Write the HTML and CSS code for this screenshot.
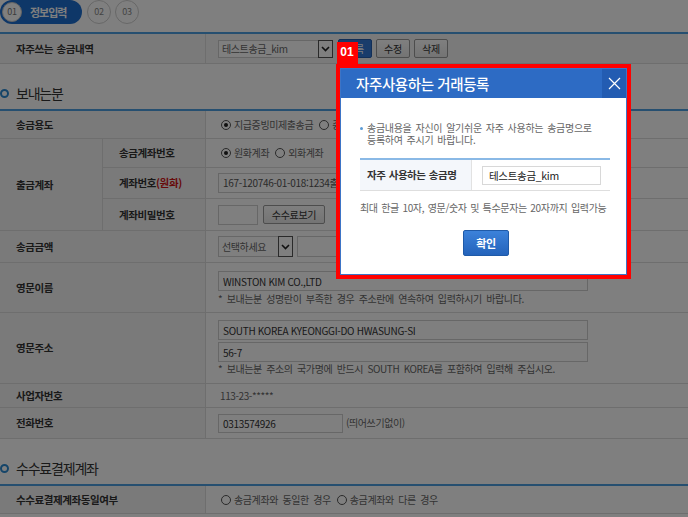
FILE: index.html
```html
<!DOCTYPE html>
<html lang="ko">
<head>
<meta charset="utf-8">
<title>해외송금 정보입력</title>
<link rel="stylesheet" href="styles.css">
</head>
<body>
<div class="page">
  <div class="steps">
    <div class="step-active"><span class="step-num">01</span><span class="step-label">정보입력</span></div>
    <span class="step-circle first">02</span>
    <span class="step-circle">03</span>
  </div>

  <div class="tbl">
    <div class="tr tr-fav h30">
      <div class="th">자주쓰는 송금내역</div>
      <div class="td gap4">
        <div class="select sel-fav"><span class="sel-text">테스트송금_kim</span><span class="sel-arrow"><svg width="9" height="6" viewBox="0 0 9 6"><path d="M1 1l3.5 3.5L8 1" fill="none" stroke="#222" stroke-width="1.6"/></svg></span></div>
        <button class="btn btn-blue">등록</button>
        <button class="btn">수정</button>
        <button class="btn">삭제</button>
      </div>
    </div>
  </div>

  <h2 class="section"><span class="ring"></span>보내는분</h2>

  <div class="tbl">
    <div class="tr h28">
      <div class="th">송금용도</div>
      <div class="td radios clip">
        <label class="opt"><span class="radio on"></span>지급증빙미제출송금</label>
        <label class="opt"><span class="radio"></span>증빙</label>
      </div>
    </div>
    <div class="tr group">
      <div class="th">출금계좌</div>
      <div class="sub">
        <div class="subrow h29">
          <div class="th sub-th">송금계좌번호</div>
          <div class="td radios">
            <label class="opt"><span class="radio on"></span>원화계좌</label>
            <label class="opt"><span class="radio"></span>외화계좌</label>
          </div>
        </div>
        <div class="subrow h31">
          <div class="th sub-th">계좌번호<em class="red">(원화)</em></div>
          <div class="td">
            <div class="field w370 acct">167-120746-01-018:1234출금</div>
          </div>
        </div>
        <div class="subrow h31">
          <div class="th sub-th">계좌비밀번호</div>
          <div class="td gap5">
            <input class="field w40 h20" type="password" readonly>
            <button class="btn btn-fee">수수료보기</button>
          </div>
        </div>
      </div>
    </div>
    <div class="tr h32">
      <div class="th">송금금액</div>
      <div class="td gap4">
        <div class="select sel-amt"><span class="sel-text">선택하세요</span><span class="sel-arrow"><svg width="9" height="6" viewBox="0 0 9 6"><path d="M1 1l3.5 3.5L8 1" fill="none" stroke="#222" stroke-width="1.6"/></svg></span></div>
        <input class="field w120 h21" type="text" readonly>
      </div>
    </div>
    <div class="tr h50">
      <div class="th">영문이름</div>
      <div class="td stack">
        <input class="field w370 h20" type="text" value="WINSTON KIM CO.,LTD" readonly>
        <p class="note">* 보내는분 성명란이 부족한 경우 주소란에 연속하여 입력하시기 바랍니다.</p>
      </div>
    </div>
    <div class="tr h71">
      <div class="th">영문주소</div>
      <div class="td stack stack-addr">
        <input class="field w370 h20" type="text" value="SOUTH KOREA KYEONGGI-DO HWASUNG-SI" readonly>
        <input class="field w370 h20" type="text" value="56-7" readonly>
        <p class="note">* 보내는분 주소의 국가명에 반드시 SOUTH KOREA를 포함하여 입력해 주십시오.</p>
      </div>
    </div>
    <div class="tr h24">
      <div class="th">사업자번호</div>
      <div class="td"><span class="biz">113-23-*****</span></div>
    </div>
    <div class="tr h31">
      <div class="th">전화번호</div>
      <div class="td gap3">
        <input class="field w125 h19" type="text" value="0313574926" readonly>
        <span class="hint">(띄어쓰기없이)</span>
      </div>
    </div>
  </div>

  <h2 class="section"><span class="ring"></span>수수료결제계좌</h2>

  <div class="tbl">
    <div class="tr h28">
      <div class="th">수수료결제계좌동일여부</div>
      <div class="td radios">
        <label class="opt"><span class="radio"></span>송금계좌와 동일한 경우</label>
        <label class="opt"><span class="radio"></span>송금계좌와 다른 경우</label>
      </div>
    </div>
  </div>
</div>

<div class="overlay"></div>

<div class="callout">
  <span class="badge">01</span>
  <div class="modal">
    <div class="modal-head">
      <h3 class="modal-title">자주사용하는 거래등록</h3>
      <button class="modal-close" aria-label="닫기"><svg width="13" height="13" viewBox="0 0 13 13"><path d="M1 1l11 11M12 1L1 12" stroke="#fff" stroke-width="1.2"/></svg></button>
    </div>
    <div class="modal-body">
      <p class="desc"><span class="dot"></span><span>송금내용을 자신이 알기쉬운 자주 사용하는 송금명으로<br>등록하여 주시기 바랍니다.</span></p>
      <div class="mtbl">
        <div class="mth">자주 사용하는 송금명</div>
        <div class="mtd"><input class="mfield" type="text" value="테스트송금_kim" readonly></div>
      </div>
      <p class="mnote">최대 한글 10자, 영문/숫자 및 특수문자는 20자까지 입력가능</p>
      <button class="btn-ok">확인</button>
    </div>
  </div>
</div>
</body>
</html>
```

FILE: styles.css
```css
* { box-sizing: border-box; margin: 0; padding: 0; }
html, body { width: 688px; height: 517px; overflow: hidden; }
body {
  position: relative;
  background: #fff;
  font-family: "Noto Sans CJK KR", "Noto Sans", sans-serif;
  font-size: 10px;
  line-height: 12px;
  color: #666;
}
button, input { font-family: inherit; }
em { font-style: normal; }

/* steps */
.steps { height: 32px; display: flex; align-items: flex-start; gap: 4px; }
.step-active {
  display: flex; align-items: center;
  width: 82px; height: 24px; border-radius: 12px;
  background: #1c6ed0; padding-left: 2px;
}
.step-num {
  width: 20px; height: 20px; border-radius: 50%;
  background: #fff; border: 1px solid #c8c8c8;
  display: flex; align-items: center; justify-content: center;
  font-size: 9px; color: #777; letter-spacing: -0.3px;
}
.step-label { margin-left: 8px; color: #fff; font-weight: 700; font-size: 11px; letter-spacing: -1px; }
.step-circle {
  width: 24px; height: 24px; border-radius: 50%;
  background: #fff; border: 1px solid #cfcfcf;
  display: flex; align-items: center; justify-content: center;
  font-size: 9px; color: #888; letter-spacing: -0.3px;
}
.step-circle.first { margin-left: 1px; }

/* tables */
.tbl { border-top: 2px solid #4d9ee0; }
.tr { display: grid; grid-template-columns: 206px 1fr; border-bottom: 1px solid #dcdcdc; }
.tr-fav { background: #f5f5f5; }
.th {
  background: #f5f5f5; border-right: 1px solid #dcdcdc;
  padding-left: 16px; display: flex; align-items: center;
  font-size: 10.5px; font-weight: 700; color: #333;
  letter-spacing: -0.4px; word-spacing: 1px;
}
.td {
  padding-left: 12px; display: flex; align-items: center;
  color: #666; letter-spacing: -0.4px; word-spacing: 2px;
}
.clip { overflow: hidden; }
.h24 { height: 24px; } .h28 { height: 28px; } .h29 { height: 29px; }
.h30 { height: 30px; } .h31 { height: 31px; } .h32 { height: 32px; }
.h50 { height: 50px; } .h71 { height: 71px; }
.gap3 { gap: 3px; } .gap4 { gap: 4px; } .gap5 { gap: 5px; }

.group { grid-template-columns: 103px 1fr; }
.sub { display: flex; flex-direction: column; }
.subrow { display: grid; grid-template-columns: 103px 1fr; border-bottom: 1px solid #dcdcdc; }
.subrow:last-child { border-bottom: 0; }
.red { color: #d01515; }

.section {
  height: 45px; padding-top: 13px;
  display: flex; align-items: center;
  font-size: 14px; font-weight: 400; color: #333; letter-spacing: -1.2px;
}
.ring {
  width: 9px; height: 9px; border-radius: 50%;
  border: 2.5px solid #2b8ad2; background: #fff; margin-right: 7px;
}

/* controls */
.select { display: flex; background: #fff; }
.sel-text {
  flex: 1; border: 1px solid #cfcfcf; border-right: 0;
  padding-left: 3px; color: #666; display: flex; align-items: center;
}
.sel-arrow {
  width: 15px; border: 1px solid #555; background: #fff;
  display: flex; align-items: center; justify-content: center;
}
.sel-fav { width: 115px; height: 18px; margin-right: 1px; }
.sel-amt { width: 75px; height: 21px; }

.btn {
  width: 34px; height: 19px; border: 1px solid #9a9a9a; border-radius: 2px;
  background: linear-gradient(#ffffff, #e8e8e8);
  font-size: 10px; color: #333; letter-spacing: -0.3px;
}
.btn-blue { background: #3278d6; border-color: #245fb0; color: #fff; }
.btn-fee { width: 62px; }

.field {
  height: 20px; border: 1px solid #cfcfcf; background: #fff;
  padding: 0 4px; font-size: 10px; color: #333; letter-spacing: -0.3px;
  outline: none;
}
.acct { display: flex; align-items: center; height: 20px; color: #555; white-space: nowrap; overflow: hidden; }
.w40 { width: 40px; } .w120 { width: 120px; } .w125 { width: 125px; } .w370 { width: 370px; }
.h19 { height: 19px; } .h20 { height: 20px; } .h21 { height: 21px; }

.stack { flex-direction: column; align-items: flex-start; padding-top: 8px; gap: 2px; }
.stack-addr { padding-top: 7px; }
.stack-addr .note { margin-top: -1px; }
.note { color: #666; }
.biz { color: #666; padding-left: 2px; }
.hint { color: #666; }

.radios { padding-left: 15px; }
.opt { display: flex; align-items: center; margin-right: 6px; white-space: nowrap; }
.radio {
  width: 10px; height: 10px; border-radius: 50%;
  border: 1px solid #555; background: #fff; margin-right: 3px;
  display: flex; align-items: center; justify-content: center;
}
.radio.on::after { content: ""; width: 4px; height: 4px; border-radius: 50%; background: #222; }

/* overlay + modal */
.overlay { position: absolute; inset: 0; background: rgba(0, 0, 0, 0.5); }
.callout {
  position: absolute; left: 336px; top: 64px;
  width: 295px; height: 215px; border: 4px solid #ff0000;
}
.badge {
  position: absolute; left: -3px; top: -26px;
  width: 21px; height: 22px; background: #ff0000; color: #fff;
  font: 700 12px/20px "Liberation Sans", sans-serif; text-align: center; padding-right: 1px;
}
.modal {
  height: 100%; background: #fff; border: 1px solid #3d74c6;
  display: flex; flex-direction: column;
}
.modal-head { height: 29px; display: flex; background: #2d6bc4; flex-shrink: 0; }
.modal-title {
  flex: 1; padding-left: 15px; display: flex; align-items: center;
  color: #fff; font-size: 14.5px; font-weight: 500; letter-spacing: -0.4px;
}
.modal-close {
  width: 24px; border: 0; background: #235cb2;
  display: flex; align-items: center; justify-content: center;
}
.modal-body { padding: 24px 16px 0 19px; display: flex; flex-direction: column; }
.desc {
  display: flex; color: #666; letter-spacing: -0.3px; word-spacing: 1.5px;
}
.dot { width: 3px; height: 3px; border-radius: 50%; background: #5b9bd5; margin: 5px 4px 0 0; flex-shrink: 0; }
.mtbl {
  margin-top: 12px; height: 33px;
  display: grid; grid-template-columns: 112px 1fr;
  border-top: 2px solid #8ab9e6; border-bottom: 1px solid #dedede;
}
.mth {
  background: #f4f7fb; border-right: 1px solid #e2e2e2;
  padding-left: 7px; display: flex; align-items: center;
  font-size: 10.5px; font-weight: 700; color: #333; letter-spacing: -0.5px; word-spacing: 1px;
}
.mtd { padding-left: 10px; display: flex; align-items: center; }
.mfield {
  width: 119px; height: 19px; border: 1px solid #d8d8d8; padding-left: 6px;
  font-size: 10.5px; color: #222; letter-spacing: -0.3px; outline: none;
}
.mnote { margin-top: 11px; color: #666; letter-spacing: -0.33px; word-spacing: 1px; }
.btn-ok {
  margin: 16px auto 0; width: 46px; height: 26px;
  border: 1px solid #1f5aa8; border-radius: 2px;
  background: linear-gradient(#3c82da, #2463bb);
  color: #fff; font-size: 11px; font-weight: 700; letter-spacing: -0.3px;
  transform: translateX(1px);
}
```
